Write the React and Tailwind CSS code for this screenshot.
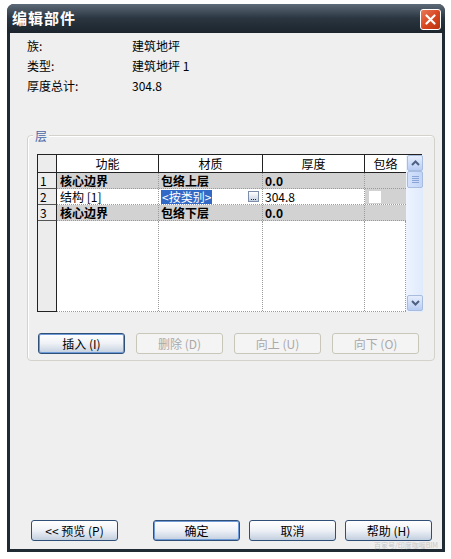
import React from 'react';

const font = { fontFamily: '"Noto Sans CJK SC", "Liberation Sans", sans-serif' };

const XpButton = ({ label, def, disabled, className = '' }) => {
  if (disabled) {
    return (
      <div className={`h-[21px] w-[87px] flex items-center justify-center rounded-[3px] border border-[#c9c7ba] bg-[#f4f4f4] text-[12px] text-[#a9a9a9] ${className}`}>
        {label}
      </div>
    );
  }
  return (
    <div
      className={`h-[21px] w-[87px] flex items-center justify-center rounded-[3px] border border-[#2f4f77] bg-linear-to-b from-white via-[#eef1f6] to-[#c3cfdf] text-[12px] text-black ${def ? 'shadow-[inset_0_0_0_1px_#6f9ad8]' : ''} ${className}`}
    >
      {label}
    </div>
  );
};

const ChevronUp = () => (
  <svg width="9" height="6" viewBox="0 0 9 6">
    <path d="M1 5 L4.5 1.5 L8 5" fill="none" stroke="#4d6185" strokeWidth="2" />
  </svg>
);

const ChevronDown = () => (
  <svg width="9" height="6" viewBox="0 0 9 6">
    <path d="M1 1 L4.5 4.5 L8 1" fill="none" stroke="#4d6185" strokeWidth="2" />
  </svg>
);

const rows = [
  { n: '1', fn: '核心边界', mat: '包络上层', th: '0.0', bold: true },
  { n: '2', fn: '结构 [1]', mat: '<按类别>', th: '304.8', bold: false },
  { n: '3', fn: '核心边界', mat: '包络下层', th: '0.0', bold: true },
];

const LayerTable = () => (
  <div className="flex w-[385px] h-[158px] border-t border-l border-[#222]">
    <div className="flex flex-col w-[368px]">
      {/* header */}
      <div className="flex h-[18px] bg-white border-b border-[#222] text-[12px]">
        <div className="w-[19px] bg-[#ececec] border-r border-[#222]" />
        <div className="w-[102px] border-r border-[#222] flex items-center justify-center">功能</div>
        <div className="w-[104px] border-r border-[#222] flex items-center justify-center">材质</div>
        <div className="w-[102px] border-r border-[#222] flex items-center justify-center">厚度</div>
        <div className="w-[41px] flex items-center justify-center">包络</div>
      </div>
      {rows.map((r) => (
        <div
          key={r.n}
          className={`flex h-[16px] text-[12px] leading-none border-b border-dotted border-[#9a9a9a] ${r.bold ? 'bg-[#d2d2d2] font-bold' : 'bg-white'}`}
        >
          <div className="w-[19px] bg-[#ececec] border-r border-[#222] border-b border-b-[#555] -mb-px flex items-center pl-[2px] font-normal">
            {r.n}
          </div>
          <div className="w-[102px] border-r border-dotted border-[#9a9a9a] flex items-center pl-[3px]">{r.fn}</div>
          <div className="w-[104px] border-r border-dotted border-[#9a9a9a] flex items-center pl-[2px] relative">
            {r.bold ? (
              r.mat
            ) : (
              <>
                <span className="bg-[#3169c6] text-white px-[1px] h-[14px] flex items-center">{r.mat}</span>
                <span className="absolute right-[3px] top-[2px] w-[11px] h-[11px] border border-[#7f8ea8] bg-linear-to-b from-white to-[#c6d1e0] flex items-end justify-center gap-[1px] pb-[1px]">
                  <span className="w-px h-px bg-[#222]" />
                  <span className="w-px h-px bg-[#222]" />
                  <span className="w-px h-px bg-[#222]" />
                </span>
              </>
            )}
          </div>
          <div className="w-[102px] border-r border-dotted border-[#9a9a9a] flex items-center pl-[2px]">{r.th}</div>
          <div className={`w-[41px] flex items-center pl-[4px] ${r.bold ? '' : 'bg-[#d2d2d2]'}`}>
            {!r.bold && <span className="w-[12px] h-[12px] bg-white" />}
          </div>
        </div>
      ))}
      <div className="flex flex-1 bg-white border-b border-dotted border-[#9a9a9a]">
        <div className="w-[19px] bg-[#ececec] border-r border-[#222] border-b border-b-[#222] -mb-px" />
        <div className="w-[102px] border-r border-dotted border-[#9a9a9a]" />
        <div className="w-[104px] border-r border-dotted border-[#9a9a9a]" />
        <div className="w-[102px] border-r border-dotted border-[#9a9a9a]" />
        <div className="w-[41px] border-r border-dotted border-[#9a9a9a]" />
      </div>
    </div>
    {/* scrollbar */}
    <div className="w-[17px] flex flex-col bg-linear-to-r from-[#eef4fe] to-[#dfeafc] pl-[1px]">
      <div className="h-[16px] w-[16px] rounded-[2px] border border-[#a8bce0] bg-linear-to-b from-[#e6eefc] to-[#b9cdf3] flex items-center justify-center">
        <ChevronUp />
      </div>
      <div className="h-[17px] w-[16px] rounded-[2px] border border-[#a8bce0] bg-linear-to-r from-[#d4e1fa] to-[#c2d5f8] flex flex-col items-center justify-center gap-[1px]">
        <span className="w-[7px] h-px bg-[#8aa4d8]" />
        <span className="w-[7px] h-px bg-[#8aa4d8]" />
        <span className="w-[7px] h-px bg-[#8aa4d8]" />
        <span className="w-[7px] h-px bg-[#8aa4d8]" />
      </div>
      <div className="flex-1" />
      <div className="h-[16px] w-[16px] rounded-[2px] border border-[#a8bce0] bg-linear-to-b from-[#e6eefc] to-[#b9cdf3] flex items-center justify-center mb-[1px]">
        <ChevronDown />
      </div>
    </div>
  </div>
);

export default function App() {
  return (
    <div className="w-[451px] h-[559px] bg-white pt-[4px] pl-[7px]" style={font}>
      <div className="w-[438px] h-[548px] rounded-t-[7px] bg-[#1f2a33] flex flex-col">
        {/* title bar */}
        <div className="h-[29px] rounded-t-[7px] bg-linear-to-b from-[#5d6a77] via-[#2a3540] to-[#1c252d] flex items-center justify-between pl-[5px] pr-[4px]">
          <span className="text-white font-bold text-[15px] tracking-[1px]">编辑部件</span>
          <div className="w-[21px] h-[21px] rounded-[3px] border border-white bg-linear-to-br from-[#e8795a] via-[#d9481f] to-[#b8330f] flex items-center justify-center mt-[1px]">
            <svg width="11" height="11" viewBox="0 0 11 11">
              <path d="M1.5 1.5 L9.5 9.5 M9.5 1.5 L1.5 9.5" stroke="white" strokeWidth="2.2" strokeLinecap="round" />
            </svg>
          </div>
        </div>
        {/* body */}
        <div className="flex-1 mx-[3px] mb-[3px] bg-[#efefef] flex flex-col relative text-[12px] text-black">
          <div className="pt-[3px] pl-[17px] flex flex-col">
            <div className="flex h-[20px] items-center">
              <span className="w-[105px]">族:</span>
              <span>建筑地坪</span>
            </div>
            <div className="flex h-[20px] items-center">
              <span className="w-[105px]">类型:</span>
              <span>建筑地坪 1</span>
            </div>
            <div className="flex h-[20px] items-center">
              <span className="w-[105px]">厚度总计:</span>
              <span>304.8</span>
            </div>
          </div>

          {/* group box */}
          <div className="relative ml-[17px] mt-[39px] w-[408px] h-[226px] rounded-[4px] border border-[#d3d3cb] shadow-[inset_1px_1px_0_#fff] pl-[9px] pt-[18px]">
            <span className="absolute left-[5px] -top-[9px] bg-[#efefef] px-[2px] text-[12px] text-[#4766a8]">层</span>
            <LayerTable />
            <div className="flex gap-[11px] mt-[21px] pl-[1px]">
              <XpButton label="插入 (I)" def />
              <XpButton label="删除 (D)" disabled />
              <XpButton label="向上 (U)" disabled />
              <XpButton label="向下 (O)" disabled />
            </div>
          </div>

          {/* bottom buttons */}
          <div className="mt-auto mb-[8px] flex pl-[21px]">
            <XpButton label="<< 预览 (P)" />
            <XpButton label="确定" def className="ml-[35px]" />
            <XpButton label="取消" className="ml-[9px]" />
            <XpButton label="帮助 (H)" className="ml-[9px]" />
          </div>
          <span className="absolute right-[4px] bottom-0 text-[7px] leading-[8px] text-[#c8c8c8]">百家号/印度咖喱BIM</span>
        </div>
      </div>
    </div>
  );
}
